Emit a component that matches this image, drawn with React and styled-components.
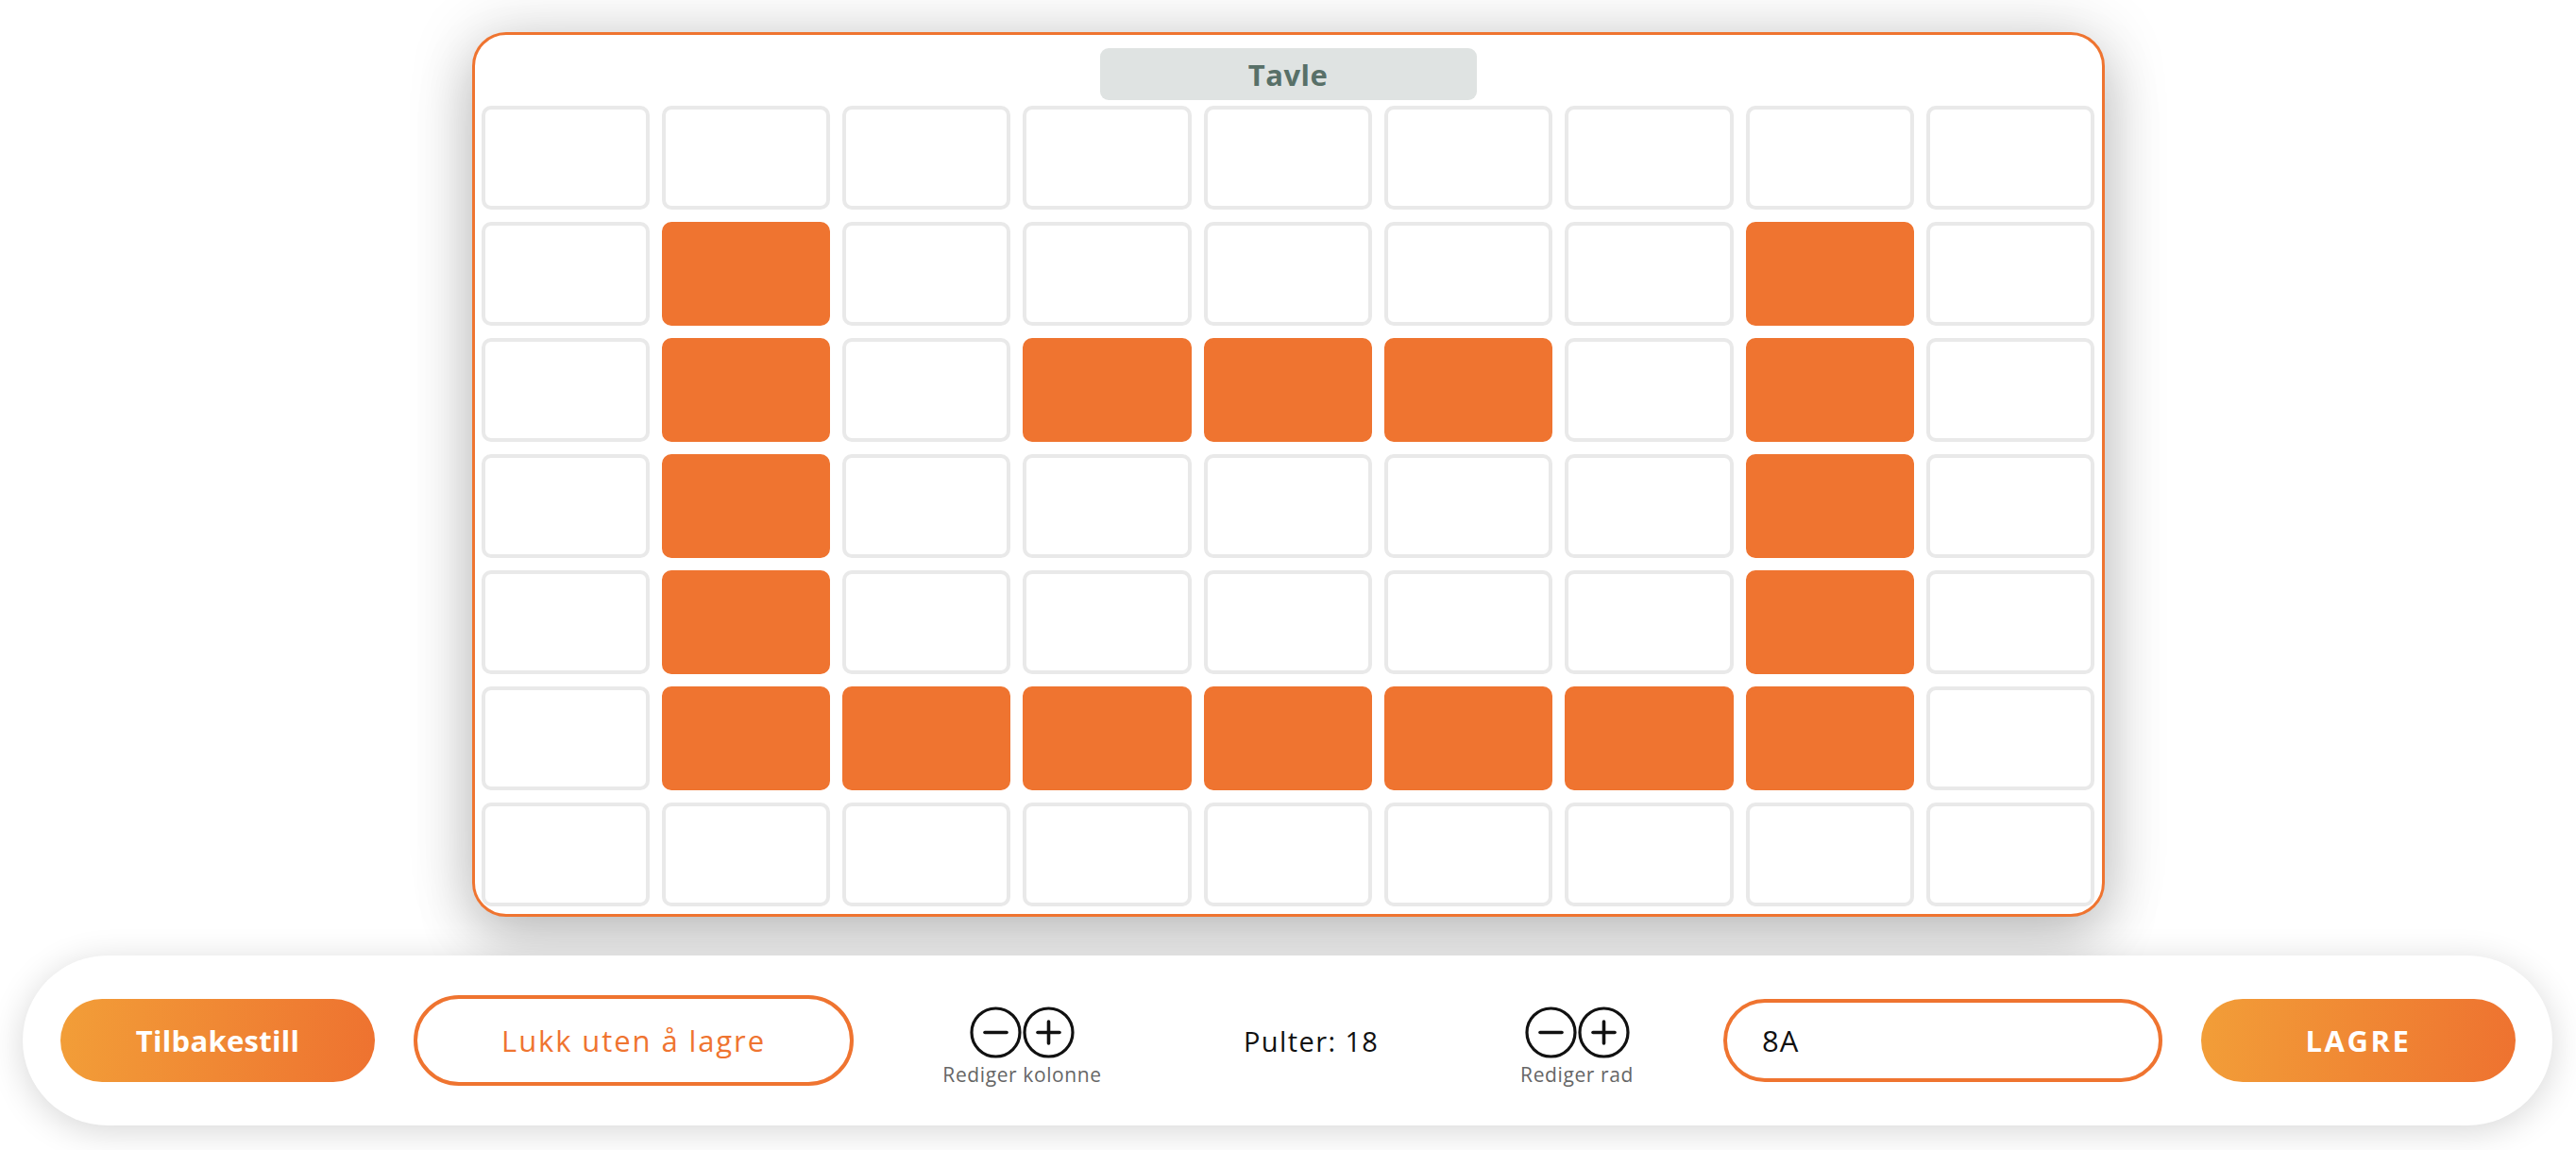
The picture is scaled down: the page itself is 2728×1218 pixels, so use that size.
import React from "react";
import styled, { createGlobalStyle } from "styled-components";

const GlobalStyle = createGlobalStyle`
  html, body {
    margin: 0;
    padding: 0;
    background: #ffffff;
    font-family: "Open Sans", "Liberation Sans", sans-serif;
  }
  * { box-sizing: border-box; }
`;

const ORANGE = "#ef7430";

const Page = styled.div`
  width: 100%;
  min-height: 1218px;
  display: flex;
  flex-direction: column;
  align-items: center;
  padding-top: 34px;
  overflow: hidden;
`;

const Board = styled.section`
  width: 1729px;
  height: 937px;
  border: 3px solid ${ORANGE};
  border-radius: 36px;
  background: #ffffff;
  box-shadow: 0 0 70px rgba(0, 0, 0, 0.16), 0 28px 60px rgba(0, 0, 0, 0.18);
  padding: 14px 7px 8px;
  display: flex;
  flex-direction: column;
  align-items: center;
  position: relative;
  z-index: 1;
`;

const BoardLabel = styled.div`
  width: 399px;
  height: 55px;
  border-radius: 9px;
  background: #dfe3e2;
  color: #587068;
  font-family: "Open Sans", "Liberation Sans", sans-serif;
  font-weight: 700;
  font-size: 31px;
  letter-spacing: 0.5px;
  display: flex;
  align-items: center;
  justify-content: center;
  margin-bottom: 6px;
`;

const Grid = styled.div`
  width: 100%;
  display: grid;
  grid-template-columns: repeat(9, 1fr);
  grid-template-rows: repeat(7, 110px);
  gap: 13px;
`;

const Desk = styled.div`
  border-radius: 10px;
  border: 4px solid ${(p) => (p.$active ? ORANGE : "#e9e9e9")};
  background: ${(p) => (p.$active ? ORANGE : "#ffffff")};
`;

const Bar = styled.footer`
  align-self: stretch;
  margin: 41px 25px 0 24px;
  height: 180px;
  border-radius: 90px;
  background: #ffffff;
  box-shadow: 0 6px 36px rgba(0, 0, 0, 0.16);
  padding: 0 39px 0 40px;
  display: flex;
  align-items: center;
  justify-content: space-between;
  position: relative;
  z-index: 2;
`;

const Group = styled.div`
  display: flex;
  align-items: center;
  gap: ${(p) => p.$gap}px;
`;

const GradientButton = styled.button`
  width: 333px;
  height: 88px;
  border: none;
  border-radius: 44px;
  background: linear-gradient(95deg, #f29e38 0%, #ee7230 100%);
  color: #ffffff;
  font-family: "Open Sans", "Liberation Sans", sans-serif;
  font-weight: 700;
  font-size: 31px;
  letter-spacing: ${(p) => p.$spacing || 0.3}px;
  display: flex;
  align-items: center;
  justify-content: center;
  padding: 0;
  cursor: pointer;
`;

const OutlineButton = styled.button`
  width: 466px;
  height: 96px;
  border: 4px solid ${ORANGE};
  border-radius: 48px;
  background: #ffffff;
  color: ${ORANGE};
  font-family: "Open Sans", "Liberation Sans", sans-serif;
  font-weight: 400;
  font-size: 31px;
  letter-spacing: 1.9px;
  display: flex;
  align-items: center;
  justify-content: center;
  padding: 0;
  cursor: pointer;
`;

const EditControl = styled.div`
  width: ${(p) => p.$width}px;
  display: flex;
  flex-direction: column;
  align-items: center;
  margin-top: 14px;
`;

const IconRow = styled.div`
  display: flex;
  gap: 1px;
`;

const IconButton = styled.button`
  width: 55px;
  height: 55px;
  border: none;
  background: none;
  padding: 0;
  display: flex;
  cursor: pointer;
  svg { display: block; }
`;

const EditLabel = styled.div`
  margin-top: 3px;
  font-family: "Open Sans", "Liberation Sans", sans-serif;
  font-size: 21px;
  letter-spacing: 0.6px;
  color: #666666;
  white-space: nowrap;
`;

const Count = styled.div`
  width: 142px;
  text-align: center;
  white-space: nowrap;
  font-family: "Open Sans", "Liberation Sans", sans-serif;
  font-size: 29px;
  letter-spacing: 1.4px;
  color: #111111;
`;

const NameInput = styled.input`
  width: 465px;
  height: 88px;
  border: 4px solid ${ORANGE};
  border-radius: 44px;
  background: #ffffff;
  padding: 0 0 0 37px;
  font-family: "Open Sans", "Liberation Sans", sans-serif;
  font-size: 31px;
  letter-spacing: 1px;
  color: #111111;
  outline: none;
`;

function CircleIcon({ plus }) {
  return (
    <svg width="55" height="55" viewBox="0 0 55 55" fill="none">
      <circle cx="27.5" cy="27.5" r="25.5" stroke="#111" strokeWidth="3.2" />
      <line x1="16" y1="27.5" x2="39" y2="27.5" stroke="#111" strokeWidth="3.6" strokeLinecap="round" />
      {plus && <line x1="27.5" y1="16" x2="27.5" y2="39" stroke="#111" strokeWidth="3.6" strokeLinecap="round" />}
    </svg>
  );
}

const ACTIVE = new Set([
  "1-1", "1-7",
  "2-1", "2-3", "2-4", "2-5", "2-7",
  "3-1", "3-7",
  "4-1", "4-7",
  "5-1", "5-2", "5-3", "5-4", "5-5", "5-6", "5-7",
]);

export default function App() {
  const cells = [];
  for (let r = 0; r < 7; r++) {
    for (let c = 0; c < 9; c++) {
      cells.push(<Desk key={`${r}-${c}`} $active={ACTIVE.has(`${r}-${c}`)} />);
    }
  }
  return (
    <>
      <GlobalStyle />
      <Page>
        <Board>
          <BoardLabel>Tavle</BoardLabel>
          <Grid>{cells}</Grid>
        </Board>
        <Bar>
          <Group $gap={41}>
            <GradientButton>Tilbakestill</GradientButton>
            <OutlineButton>Lukk uten å lagre</OutlineButton>
          </Group>
          <Group $gap={152}>
            <EditControl $width={165}>
              <IconRow>
                <IconButton aria-label="Fjern kolonne"><CircleIcon /></IconButton>
                <IconButton aria-label="Legg til kolonne"><CircleIcon plus /></IconButton>
              </IconRow>
              <EditLabel>Rediger kolonne</EditLabel>
            </EditControl>
            <Count>Pulter: 18</Count>
            <EditControl $width={118}>
              <IconRow>
                <IconButton aria-label="Fjern rad"><CircleIcon /></IconButton>
                <IconButton aria-label="Legg til rad"><CircleIcon plus /></IconButton>
              </IconRow>
              <EditLabel>Rediger rad</EditLabel>
            </EditControl>
          </Group>
          <Group $gap={41}>
            <NameInput defaultValue="8A" />
            <GradientButton $spacing={2.6}>LAGRE</GradientButton>
          </Group>
        </Bar>
      </Page>
    </>
  );
}
